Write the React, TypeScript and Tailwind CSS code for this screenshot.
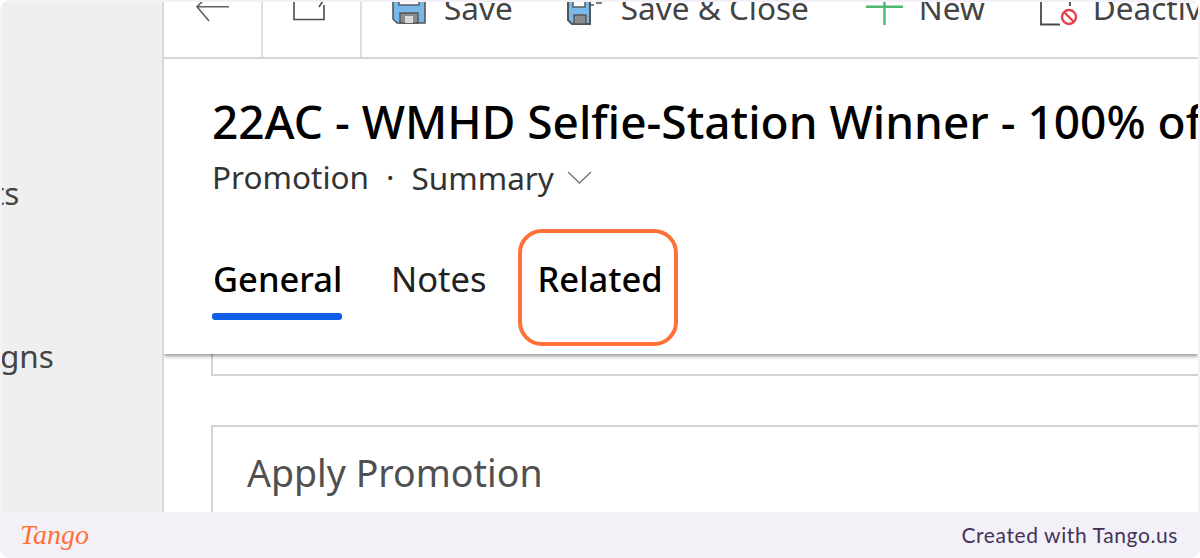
import React from "react";

const seg = { fontFamily: '"Noto Sans", "Open Sans", sans-serif' };

function Back() {
  return (
    <svg width="36" height="24" viewBox="0 0 36 24" fill="none" stroke="#5f5f5f" strokeWidth="1.6">
      <path d="M1 4.7H33M13 -7L1 4.7L13 19" />
    </svg>
  );
}
function Popout() {
  return (
    <svg width="34" height="24" viewBox="0 0 34 24" fill="none" stroke="#4d4d4d" strokeWidth="1.6">
      <path d="M12 -2H1V17.5H31V3M26 5L30 -1" />
    </svg>
  );
}
function Disk() {
  return (
    <svg width="34" height="25" viewBox="0 0 34 25">
      <path d="M1 -4H33V21H5L1 17Z" fill="#79b9ea" stroke="#555" strokeWidth="1.6" />
      <rect x="7" y="-6" width="20" height="9" fill="#fff" stroke="#555" strokeWidth="1.4" />
      <path d="M8 21V11H26V21Z" fill="#8b8b8b" stroke="#555" strokeWidth="1.4" />
      <rect x="13" y="14" width="8" height="7" fill="#d9d9d9" />
    </svg>
  );
}
function SaveClose() {
  return (
    <svg width="36" height="26" viewBox="0 0 36 26">
      <path d="M1 -4H23V22H5L1 18Z" fill="#79b9ea" stroke="#555" strokeWidth="2" />
      <rect x="6" y="-4" width="12" height="9" fill="#fff" stroke="#555" strokeWidth="1.4" />
      <path d="M7 22V13H19V22Z" fill="#8b8b8b" stroke="#555" strokeWidth="1.4" />
      <path d="M23 3H27M29 1H35" fill="none" stroke="#555" strokeWidth="1.6" />
    </svg>
  );
}
function Plus() {
  return (
    <svg width="38" height="25" viewBox="0 0 38 25" fill="none" stroke="#4cb86f" strokeWidth="2.4">
      <path d="M0 4.7H37M18.5 -6V23" />
    </svg>
  );
}
function Deactivate() {
  return (
    <svg width="38" height="27" viewBox="0 0 38 27" fill="none">
      <path d="M1 0V22.5H20" stroke="#4a4a4a" strokeWidth="1.8" />
      <path d="M30 0V4" stroke="#4a4a4a" strokeWidth="1.8" />
      <circle cx="29" cy="15" r="7" stroke="#e2444e" strokeWidth="2.4" fill="#fff" />
      <path d="M24 10L34 20" stroke="#e2444e" strokeWidth="2.4" />
    </svg>
  );
}

function Cmd({ icon, label, className }: { icon: React.ReactNode; label: string; className: string }) {
  return (
    <div className={`flex items-start shrink-0 ${className}`}>
      {icon}
      <span className="text-[31.5px] leading-[36px] text-[#444] whitespace-nowrap -mt-[12px]">{label}</span>
    </div>
  );
}

export default function App() {
  return (
    <div className="w-[1200px] h-[558px] bg-white overflow-hidden">
      <div className="w-full h-full rounded-[10px] bg-[#f3f1f7] overflow-hidden flex flex-col" style={seg}>
        <div className="h-[510px] shrink-0 mt-[2px] ml-[2px] mr-[2px] flex overflow-hidden rounded-tr-[8px]">
          <aside className="w-[162px] shrink-0 h-full bg-[#efefef] border-r-2 border-[#d9d9d9] overflow-hidden flex flex-col">
            <div className="text-[31.5px] leading-[36px] text-[#444] mt-[173px] whitespace-nowrap -ml-[9px]">ts</div>
            <div className="text-[31.5px] leading-[36px] text-[#444] mt-[127px] whitespace-nowrap -ml-[2px]">gns</div>
          </aside>
          <main className="flex-1 min-w-0 bg-white flex flex-col overflow-hidden relative">
            <div className="h-[57px] shrink-0 flex border-b-2 border-[#dedede] overflow-hidden">
              <div className="w-[99px] shrink-0 border-r-2 border-[#dedede] pl-[32px]"><Back /></div>
              <div className="w-[99px] shrink-0 border-r-2 border-[#dedede] pl-[30px]"><Popout /></div>
              <Cmd icon={<Disk />} label="Save" className="ml-[30px] gap-[18px]" />
              <Cmd icon={<SaveClose />} label="Save & Close" className="ml-[54px] gap-[18px]" />
              <Cmd icon={<Plus />} label="New" className="ml-[57px] gap-[15px]" />
              <Cmd icon={<Deactivate />} label="Deactivate" className="ml-[55px] gap-[15px]" />
            </div>
            <div className="h-[295px] shrink-0 bg-white shadow-[0_2px_4px_rgba(0,0,0,0.45)] relative z-10 pl-[48px] flex flex-col">
              <h1 className="text-[46px] leading-[60px] font-medium text-black whitespace-nowrap mt-[32px]">22AC - WMHD Selfie-Station Winner - 100% off</h1>
              <div className="flex items-center text-[31.5px] leading-[40px] text-[#333] mt-[5px] whitespace-nowrap">
                <span>Promotion</span>
                <span className="ml-[17px]">·</span>
                <span className="ml-[17px] mt-[2px]">Summary</span>
                <svg className="ml-[13px]" width="25" height="13" viewBox="0 0 25 13" fill="none" stroke="#777" strokeWidth="1.4">
                  <path d="M1 1L12.5 12L24 1" />
                </svg>
              </div>
              <div className="flex mt-[59px] text-[34.5px] leading-[44px] text-[#111]">
                <div className="flex flex-col w-[130px] shrink-0">
                  <span className="font-medium text-black pl-[1px]">General</span>
                  <div className="h-[7px] w-[130px] rounded-[3px] bg-[#0f5fe6] mt-[12px]" />
                </div>
                <span className="ml-[49px] text-[#222]">Notes</span>
                <div className="ml-[31px] w-[160px] h-[117px] -mt-[28px] border-[4px] border-[#ff7139] rounded-[24px] pl-[16px] pt-[24px] font-medium text-black shrink-0">
                  Related
                </div>
              </div>
            </div>
            <div className="flex-1 min-h-0 pl-[47px] flex flex-col">
              <div className="h-[22px] border-l-2 border-b-2 border-[#d3d3d3] shrink-0" />
              <div className="mt-[49px] flex-1 border-l-2 border-t-2 border-[#d3d3d3] pl-[34px] pt-[22px]">
                <div className="text-[37.5px] leading-[48px] text-[#505050] whitespace-nowrap">Apply Promotion</div>
              </div>
            </div>
          </main>
        </div>
        <footer className="flex-1 flex items-center justify-between pl-[20px] pr-[22px]">
          <span className="text-[#ff7139] text-[28px] leading-[36px] italic" style={{ fontFamily: '"Liberation Serif", serif' }}>Tango</span>
          <span className="text-[21px] leading-[28px] text-[#42325a] tracking-[0.6px]" style={{ fontFamily: 'Lato, sans-serif' }}>Created with Tango.us</span>
        </footer>
      </div>
    </div>
  );
}
